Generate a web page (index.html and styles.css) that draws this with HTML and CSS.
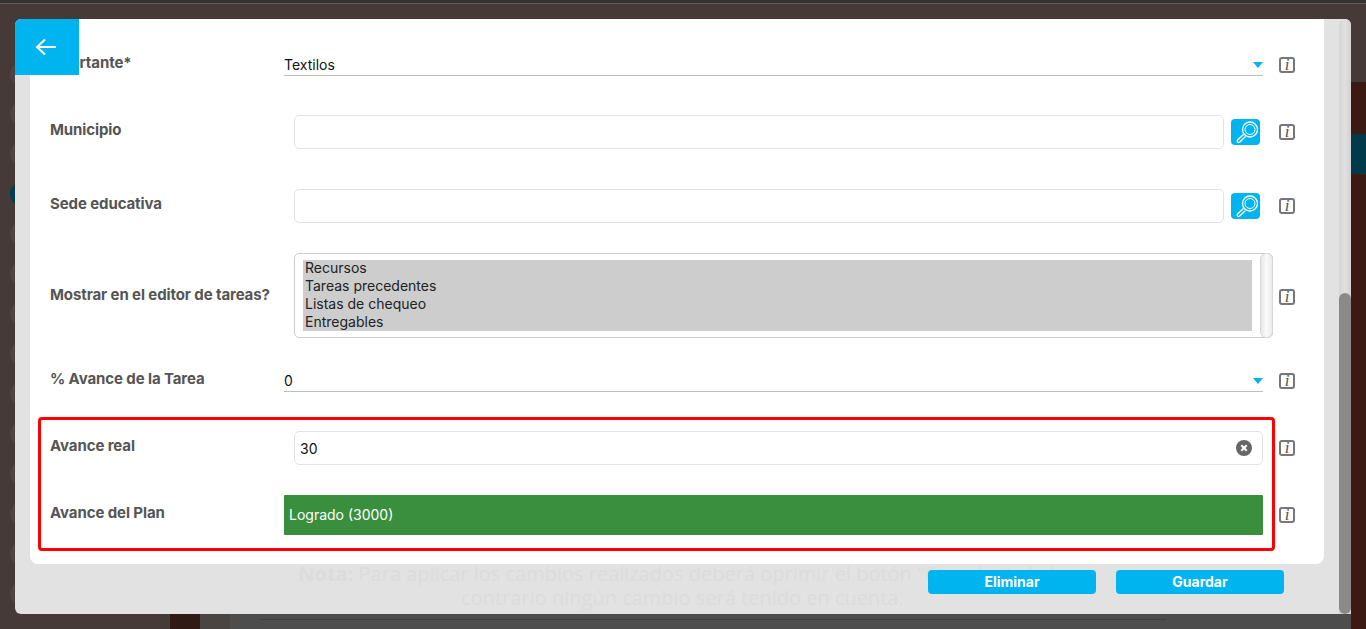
FILE: index.html
```html
<!DOCTYPE html>
<html lang="es">
<head>
<meta charset="utf-8">
<title>Editar tarea</title>
<link rel="stylesheet" href="styles.css">
</head>
<body>
<div class="backdrop">
  <div class="side-dots">
    <span class="dot"></span><span class="dot"></span><span class="dot"></span><span class="dot dot-active"></span><span class="dot"></span><span class="dot"></span><span class="dot"></span><span class="dot"></span><span class="dot"></span><span class="dot"></span><span class="dot"></span><span class="dot"></span><span class="dot"></span><span class="dot"></span>
  </div>
</div>
<div class="modal">
  <button class="back" aria-label="Volver">
    <svg width="22" height="18" viewBox="0 0 22 18" fill="none" stroke="#fff" stroke-width="2"><path d="M21 9H2M10 1.500L2 9l8 7.500"/></svg>
  </button>
  <div class="main">
    <div class="panel">
      <div class="row row-1">
        <div class="label">Aportante*</div>
        <div class="field"><div class="select"><span>Textilos</span><i class="caret"></i></div></div>
        <div class="info">i</div>
      </div>
      <div class="row row-2">
        <div class="label">Municipio</div>
        <div class="field field-in"><input class="input" type="text"><button class="search" aria-label="Buscar"><svg width="24" height="24" viewBox="0 0 24 24" fill="none" stroke="#fff"><circle cx="16" cy="9.500" r="7.500" stroke-width="1.300"/><circle cx="16" cy="9.500" r="5" stroke-width="1"/><path d="M9.500 14.500l-6 5.500a1.500 1.500 0 0 0 2 2.200l6-5.700" stroke-width="1.300"/></svg></button></div>
        <div class="info">i</div>
      </div>
      <div class="row row-3">
        <div class="label">Sede educativa</div>
        <div class="field field-in"><input class="input" type="text"><button class="search" aria-label="Buscar"><svg width="24" height="24" viewBox="0 0 24 24" fill="none" stroke="#fff"><circle cx="16" cy="9.500" r="7.500" stroke-width="1.300"/><circle cx="16" cy="9.500" r="5" stroke-width="1"/><path d="M9.500 14.500l-6 5.500a1.500 1.500 0 0 0 2 2.200l6-5.700" stroke-width="1.300"/></svg></button></div>
        <div class="info">i</div>
      </div>
      <div class="row row-4">
        <div class="label">Mostrar en el editor de tareas?</div>
        <div class="field field-multi">
          <div class="multi">
            <ul class="options"><li>Recursos</li><li>Tareas precedentes</li><li>Listas de chequeo</li><li>Entregables</li></ul>
            <div class="multi-scroll"></div>
          </div>
        </div>
        <div class="info info-low">i</div>
      </div>
      <div class="row row-5">
        <div class="label">% Avance de la Tarea</div>
        <div class="field"><div class="select"><span>0</span><i class="caret"></i></div></div>
        <div class="info">i</div>
      </div>
      <div class="row row-6">
        <div class="label">Avance real</div>
        <div class="field field-real"><div class="input input-clear"><span>30</span><svg width="16" height="16" viewBox="0 0 16 16"><circle cx="8" cy="8" r="8" fill="#666"/><path d="M5.300 5.300l5.400 5.400M10.700 5.300l-5.400 5.400" stroke="#fff" stroke-width="2"/></svg></div></div>
        <div class="info">i</div>
      </div>
      <div class="row row-7">
        <div class="label">Avance del Plan</div>
        <div class="field field-real"><div class="plan">Logrado (3000)</div></div>
        <div class="info">i</div>
      </div>
      <div class="highlight"></div>
    </div>
    <div class="footer">
      <p class="note"><b>Nota:</b> Para aplicar los cambios realizados deberá oprimir el botón "Guardar", de lo<br>contrario ningún cambio será tenido en cuenta.</p>
      <div class="actions">
        <button class="btn">Eliminar</button>
        <button class="btn">Guardar</button>
      </div>
    </div>
  </div>
  <div class="scrollbar"><div class="thumb"></div></div>
</div>
</body>
</html>
```
FILE: styles.css
```css
* { box-sizing: border-box; }
html, body { margin: 0; height: 629px; overflow: hidden; }
body { font-family: Inter, "Liberation Sans", sans-serif; background: #453a37; position: relative; }

.backdrop {
  position: absolute; inset: 0;
  background:
    linear-gradient(#333 0, #333 3px, #5c5c5c 3px, #5c5c5c 4px, transparent 4px),
    linear-gradient(to right, transparent 1351px, #3b1a14 1351px) 0 82px no-repeat,
    linear-gradient(to right, #453a37 0, #453a37 170px, #2f1a16 170px, #2f1a16 200px, #4a4542 200px, #4a4542 230px, #4d4d4d 230px) 0 614px no-repeat,
    #453a37;
}
.backdrop::before { content: ""; position: absolute; left: 1351px; top: 134px; width: 15px; height: 40px; background: #003a4b; }
.backdrop::after { content: ""; position: absolute; left: 260px; top: 619px; right: 200px; height: 1px; background: #414141; }
.side-dots { position: absolute; left: 10px; top: 62px; display: flex; flex-direction: column; gap: 16px; }
.dot { width: 24px; height: 24px; border-radius: 50%; background: #4d4340; }
.dot-active { background: #003f52; }

.modal {
  position: absolute; left: 15px; top: 19px; width: 1336px; height: 595px;
  background: #e2e2e2; border-radius: 6px; display: flex;
}
.back {
  position: absolute; left: 0; top: 0; width: 64px; height: 56px; z-index: 2;
  background: #00b4ef; border: 0; border-top-left-radius: 6px; padding: 0 2px 0 0;
  display: flex; align-items: center; justify-content: center;
}
.main { flex: none; width: 1324px; padding-left: 15px; display: flex; flex-direction: column; }
.panel {
  position: relative; width: 1294px; height: 545px; background: #fff;
  border-radius: 0 0 8px 8px; padding: 36px 0 0 20px;
}
.scrollbar {
  width: 12px; height: 595px;
  background: linear-gradient(to right, #d4d4d4, #e0e0e0 50%, #d2d2d2);
  border-radius: 6px 6px 0 0; display: flex; flex-direction: column; justify-content: flex-end;
}
.thumb { height: 321px; background: #8a8a8a; border-radius: 6px; }

.row { display: grid; grid-template-columns: 234px 989px 16px; align-items: center; }
.row .info { margin-left: 6px; }
.row-1 { height: 21px; }
.row-2 { height: 34px; margin-top: 39px; }
.row-3 { height: 34px; margin-top: 40px; }
.row-4 { height: 85px; margin-top: 30px; }
.row-5 { height: 21px; margin-top: 33px; }
.row-6 { height: 34px; margin-top: 39px; }
.row-7 { height: 40px; margin-top: 30px; }

.label { font-size: 15px; font-weight: 700; color: #555; line-height: 16px; margin-bottom: 4px; white-space: nowrap; letter-spacing: -0.1px; }
.row-1 .label, .row-5 .label { margin-bottom: 5px; }
.row-4 .label { margin-bottom: 1px; }
.info {
  width: 16px; height: 16px; border: 2px solid #777; border-radius: 3px;
  font: italic 17px/12px "Liberation Serif", serif; color: #555; text-align: center;
  background: #fff;
}
.row-1 .info, .row-5 .info { margin-bottom: 1px; }
.info-low { margin-top: 3px; }

.field { height: 100%; }
.select {
  width: 979px; height: 21px; border-bottom: 1px solid #bdbdbd;
  display: flex; align-items: center; justify-content: space-between;
  font-size: 14px; line-height: 20px; color: #111;
}
.caret { width: 0; height: 0; border: 5.500px solid transparent; border-top: 6px solid #00b4ef; border-bottom: 0; }
.field-in { display: flex; align-items: center; padding-left: 10px; }
.input {
  display: block; width: 930px; height: 34px; border: 1px solid #e3e3e3; border-radius: 5px;
  background: #fff; font: 14px Inter, sans-serif; color: #111; padding: 0 12px;
}
.search {
  width: 29px; height: 26px; margin-left: 7px; padding: 0; border: 0; border-radius: 4px; background: #00b4ef;
  display: flex; align-items: center; justify-content: center;
}
.field-multi { padding-left: 10px; }
.multi {
  width: 979px; height: 85px; border: 1px solid #ccc; border-radius: 5px; position: relative;
  padding: 6px 0 0 8px;
}
.options {
  list-style: none; margin: 0; padding: 0 0 0 2px; width: 949px; height: 71px; background: #cdcdcd;
  font-size: 14px; line-height: 18px; color: #222;
}
.options li:first-child { margin-top: -1px; }
.options::before { content: ""; display: table; }
.multi-scroll {
  position: absolute; right: -1px; top: -1px; width: 13px; height: 85px; border-radius: 6px;
  background: linear-gradient(to right, #e8e8e8, #fafafa 50%, #ececec); border: 1px solid #d8d8d8;
}
.field-real { display: flex; align-items: center; }
.field-real .input-clear { margin-left: 10px; width: 969px; display: flex; align-items: center; justify-content: space-between; padding: 0 10px 0 5px; }
.plan {
  width: 979px; height: 40px; background: #3a8f3f; color: #fff; border-radius: 1px;
  font-size: 14px; line-height: 40px; padding-left: 5px;
}
.highlight {
  position: absolute; left: 8px; top: 398px; width: 1237px; height: 134px;
  border: 3px solid #f00; border-radius: 4px; pointer-events: none;
}

.footer { position: relative; flex: 1; }
.note {
  margin: -2px 0 0 0; width: 1305px; text-align: center;
  font: 20px/24px "Open Sans", sans-serif; color: #dcdcdc; white-space: nowrap;
}
.actions { position: absolute; left: 898px; top: 6px; display: flex; gap: 20px; }
.btn {
  width: 168px; height: 24px; border: 0; border-radius: 4px; background: #00b4ef; color: #fff; padding: 0 0 2px;
  font: 700 14px Inter, sans-serif;
}
```
